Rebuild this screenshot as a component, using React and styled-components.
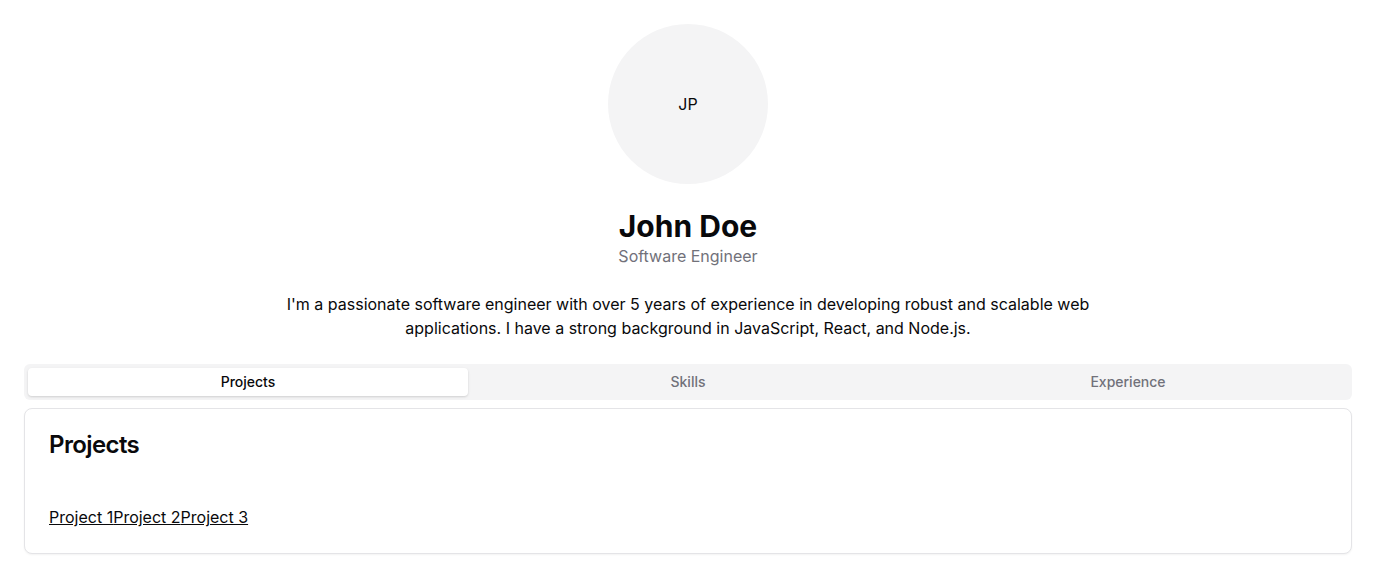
import React, { useState } from "react";
import styled, { createGlobalStyle } from "styled-components";

const Global = createGlobalStyle`
  * { box-sizing: border-box; }
  body {
    margin: 0;
    background: #ffffff;
    color: #09090b;
    font-family: Inter, "Noto Sans", sans-serif;
  }
`;

const Page = styled.div`
  padding: 24px;
  display: flex;
  flex-direction: column;
  align-items: center;
`;

const Avatar = styled.div`
  width: 160px;
  height: 160px;
  border-radius: 50%;
  background: #f4f4f5;
  display: flex;
  align-items: center;
  justify-content: center;
  font-size: 16px;
  color: #09090b;
`;

const Name = styled.h1`
  margin: 24px 0 0;
  font-size: 30px;
  line-height: 36px;
  font-weight: 700;
`;

const Role = styled.p`
  margin: 0;
  font-size: 16px;
  line-height: 24px;
  color: #71717a;
`;

const Bio = styled.p`
  margin: 24px 0 0;
  max-width: 820px;
  text-align: center;
  font-size: 16px;
  line-height: 24px;
  color: #09090b;
`;

const Tabs = styled.div`
  margin-top: 24px;
  width: 100%;
`;

const TabList = styled.div`
  display: grid;
  grid-template-columns: repeat(3, 1fr);
  padding: 4px;
  height: 36px;
  background: #f4f4f5;
  border-radius: 6px;
`;

const Trigger = styled.button`
  border: none;
  font-family: inherit;
  font-size: 14px;
  font-weight: 500;
  line-height: 20px;
  height: 28px;
  border-radius: 4px;
  cursor: pointer;
  background: ${(p) => (p.$active ? "#ffffff" : "transparent")};
  color: ${(p) => (p.$active ? "#09090b" : "#71717a")};
  box-shadow: ${(p) => (p.$active ? "0 1px 3px rgba(0,0,0,0.1), 0 1px 2px rgba(0,0,0,0.06)" : "none")};
`;

const Card = styled.div`
  margin-top: 8px;
  border: 1px solid #e4e4e7;
  border-radius: 8px;
  background: #ffffff;
  box-shadow: 0 1px 2px rgba(0, 0, 0, 0.05);
`;

const CardHeader = styled.div`
  padding: 24px 24px 0;
`;

const CardTitle = styled.h3`
  margin: 0;
  font-size: 24px;
  line-height: 24px;
  font-weight: 600;
  letter-spacing: -0.025em;
`;

const CardContent = styled.div`
  padding: 48px 24px 24px;
  font-size: 16px;
  line-height: 24px;
`;

const ItemLink = styled.a`
  color: #09090b;
  text-decoration: underline;
`;

const tabs = ["Projects", "Skills", "Experience"];
const content = {
  Projects: ["Project 1", "Project 2", "Project 3"],
  Skills: ["JavaScript", "React", "Node.js"],
  Experience: ["Company A", "Company B"],
};

export default function App() {
  const [active, setActive] = useState("Projects");
  return (
    <>
      <Global />
      <Page>
        <Avatar>JP</Avatar>
        <Name>John Doe</Name>
        <Role>Software Engineer</Role>
        <Bio>
          I'm a passionate software engineer with over 5 years of experience in developing robust and scalable web
          applications. I have a strong background in JavaScript, React, and Node.js.
        </Bio>
        <Tabs>
          <TabList>
            {tabs.map((t) => (
              <Trigger key={t} $active={t === active} onClick={() => setActive(t)}>
                {t}
              </Trigger>
            ))}
          </TabList>
          <Card>
            <CardHeader>
              <CardTitle>{active}</CardTitle>
            </CardHeader>
            <CardContent>
              {content[active].map((c) => (
                <ItemLink key={c} href="#">
                  {c}
                </ItemLink>
              ))}
            </CardContent>
          </Card>
        </Tabs>
      </Page>
    </>
  );
}
